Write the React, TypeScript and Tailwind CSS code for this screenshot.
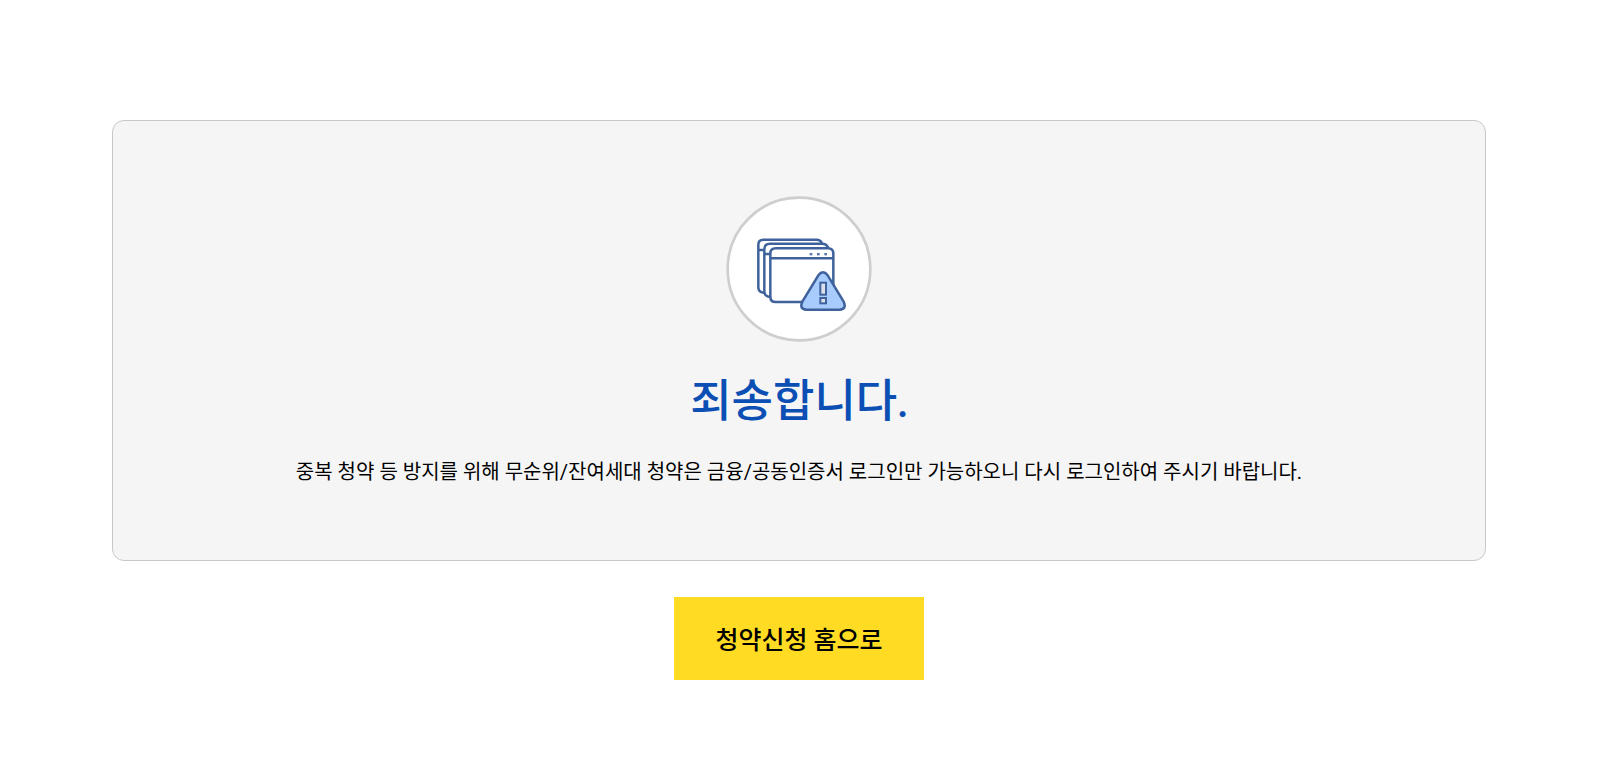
const AlertIcon = () => {
  return (
    <svg viewBox="18 18 438 438" className="size-[146px]" fill="none" aria-hidden="true">
      <circle cx="237" cy="237" r="214" fill="#fff" stroke="#cecece" strokeWidth="8" />

      {/* Stacked windows */}
      <g stroke="#3f629c" strokeWidth="7.5" strokeLinejoin="round" strokeLinecap="round">
        <path d="M131 308 Q115 307 115 292 V164 Q115 149 130 149 H290 Q301 149 305 158 M115 180 H131" />
        <path d="M150 321 Q133 320 133 304 V178 Q133 161 150 161 H306 Q319 161 324 172 M133 192 H150" />
        <path d="M246 336 H167 Q151 336 151 320 V191 Q151 175 167 175 H324 Q340 175 340 191 V288 M151 205 H340" />
      </g>
      <g fill="#5876aa">
        <rect x="269" y="189" width="8" height="7" />
        <rect x="291" y="189" width="8" height="7" />
        <rect x="313" y="189" width="8" height="7" />
      </g>

      {/* Warning triangle */}
      <path
        d="M295 256 Q309 238 323 256 L371 335 Q381 357 359 359 H259 Q237 357 247 335 Z"
        fill="#a9ccff"
        stroke="#3f629c"
        strokeWidth="7.5"
        strokeLinejoin="round"
      />
      <g fill="#dde2ea" stroke="#3f629c" strokeWidth="6">
        <rect x="301" y="278" width="17" height="36" />
        <rect x="301" y="324" width="17" height="16" />
      </g>
    </svg>
  );
};

export default function App() {
  return (
    <main
      lang="ko"
      className="flex flex-col items-center pt-[120px] pr-[111px] pb-20 pl-28 font-['Roboto','Noto_Sans_CJK_KR',sans-serif] text-black"
    >
      <section className="flex w-full flex-col items-center rounded-xl border border-[#c8c8c8] bg-[#f5f5f5] px-8 pt-[75px] pb-[74px] text-center">
        <AlertIcon />
        <h1 className="mt-6 font-['Lato','Noto_Sans_CJK_KR',sans-serif] text-[45px] leading-[68px] font-medium text-[#0c4fb4]">
          죄송합니다.
        </h1>
        <p className="mt-6 text-xl leading-7">
          중복 청약 등 방지를 위해 무순위/잔여세대 청약은 금융/공동인증서 로그인만 가능하오니 다시 로그인하여 주시기 바랍니다.
        </p>
      </section>
      <button
        type="button"
        className="mt-9 h-[83px] w-[250px] cursor-pointer bg-[#ffdc23] pt-1 text-[25px] leading-9 font-medium"
      >
        청약신청 홈으로
      </button>
    </main>
  );
}
